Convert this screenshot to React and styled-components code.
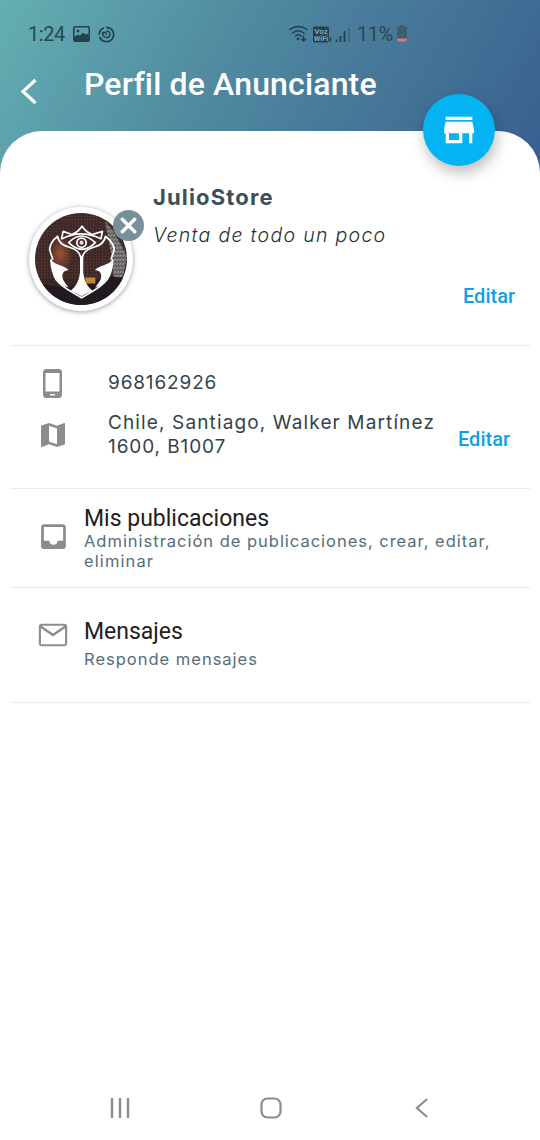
import React from 'react';
import styled, { createGlobalStyle } from 'styled-components';

const Global = createGlobalStyle`
  * { box-sizing: border-box; }
  body { margin: 0; background: #fff; font-family: Roboto, sans-serif; }
`;

const Screen = styled.div`
  width: 540px;
  height: 1140px;
  display: flex;
  flex-direction: column;
  overflow: hidden;
  background: linear-gradient(120deg, #64afb2 0, #508aa0 220px, #39608f 545px);
`;

const StatusBar = styled.header`
  height: 68px;
  padding: 0 132px 0 28px;
  display: flex;
  align-items: center;
  color: #2b4750;
  font-size: 20px;
  svg { display: block; flex: none; }
`;
const Clock = styled.span`
  width: 45px;
  letter-spacing: -0.4px;
`;
const StatusLeft = styled.div`
  display: flex;
  align-items: center;
  gap: 8px;
`;
const StatusRight = styled.div`
  display: flex;
  align-items: center;
  margin-left: auto;
`;
const Percent = styled.span`
  width: 39px;
  margin-left: 5px;
  letter-spacing: -0.5px;
`;

const TitleBar = styled.div`
  height: 63px;
  padding-left: 20px;
  display: flex;
  align-items: flex-start;
  svg { margin-top: 9px; }
`;
const Title = styled.h1`
  margin: -2px 0 0 46px;
  font-size: 32px;
  line-height: 36px;
  font-weight: 500;
  letter-spacing: 0.15px;
  color: #fff;
`;

const Sheet = styled.main`
  position: relative;
  flex: 1;
  display: flex;
  flex-direction: column;
  background: #fff;
  border-radius: 42px 42px 0 0;
`;
const StoreButton = styled.button`
  position: absolute;
  right: 45px;
  top: -37px;
  width: 72px;
  height: 72px;
  padding: 0;
  border: 0;
  border-radius: 50%;
  background: #04b4f2;
  display: grid;
  place-items: center;
  box-shadow: 2px 7px 14px rgba(0, 0, 0, 0.25);
`;

const Section = styled.section`
  height: ${(p) => p.$height}px;
  margin: 0 10px;
  border-bottom: 1px solid #ebebeb;
  display: flex;
`;
const AvatarWrap = styled.div`
  position: relative;
  width: 106px;
  height: 106px;
  margin: 75px 0 0 18px;
`;
const Avatar = styled.div`
  width: 104px;
  height: 104px;
  margin: 1px;
  padding: 6px;
  border-radius: 50%;
  background: #fff;
  box-shadow: 0 1px 5px rgba(50, 80, 85, 0.5);
  svg { display: block; }
`;
const RemoveBadge = styled.button`
  position: absolute;
  top: 4px;
  left: 85px;
  width: 31px;
  height: 31px;
  padding: 0;
  border: 0;
  border-radius: 50%;
  background: #78909a;
  display: grid;
  place-items: center;
`;
const ProfileText = styled.div`
  flex: 1;
  margin-left: 19px;
  padding: 53px 5px 0 0;
  display: flex;
  flex-direction: column;
`;
const Name = styled.h2`
  margin: 0;
  font: 700 22px/26px Inter, sans-serif;
  letter-spacing: ${(p) => p.$spacing}px;
  color: #3b505b;
`;
const Tagline = styled.p`
  margin: 12px 0 0 0;
  font: italic 300 19.5px/26px Inter, sans-serif;
  letter-spacing: ${(p) => p.$spacing}px;
  color: #263238;
`;
const EditLink = styled.button`
  align-self: flex-end;
  margin: ${(p) => p.$margin};
  padding: 0;
  border: 0;
  background: none;
  font: 500 20px/24px Roboto, sans-serif;
  color: #109fe8;
`;

const ContactList = styled.div`
  width: 428px;
  padding: 20px 0 0 26px;
  display: flex;
  flex-direction: column;
`;
const ContactRow = styled.div`
  display: flex;
  align-items: center;
  height: ${(p) => p.$height}px;
`;
const ContactIcon = styled.div`
  width: 33px;
  display: grid;
  place-items: center;
  svg { display: block; }
`;
const ContactText = styled.div`
  margin: 0 0 0 39px;
  font: 400 19px/24px Inter, sans-serif;
  color: #34434a;
`;
const Line = styled.span`
  display: block;
  white-space: nowrap;
  letter-spacing: ${(p) => p.$spacing || 0}px;
`;
const MenuIcon = styled.div`
  width: 33px;
  margin: ${(p) => p.$top}px 0 0 26px;
  svg { display: block; margin-left: ${(p) => p.$shift || 0}px; }
`;
const MenuText = styled.div`
  margin-left: 15px;
  padding-top: ${(p) => p.$top}px;
`;
const MenuTitle = styled.h3`
  margin: 0;
  font: 400 23px/27px Roboto, sans-serif;
  color: #212121;
`;
const MenuNote = styled.div`
  margin-top: ${(p) => p.$gap}px;
  font: 400 16.5px/20px Inter, sans-serif;
  color: #546e7a;
`;
const NavBar = styled.nav`
  height: 64px;
  margin-top: auto;
  padding: 0 111px 0 109px;
  display: grid;
  grid-template-columns: 151px 155px 14px;
  align-items: center;
`;

const Glyph = ({ size = 33, color = '#8c8c8c', children }) => (
  <svg width={size} height={size} viewBox="0 0 24 24" fill={color}>{children}</svg>
);

const Emblem = () => (
  <svg width="92" height="92" viewBox="0 0 90 90">
    <defs>
      <clipPath id="disc"><circle cx="45" cy="45" r="45" /></clipPath>
      <pattern id="mesh" width="3" height="3" patternUnits="userSpaceOnUse">
        <path d="M0 0h3M0 0v3" stroke="#77584e" strokeWidth=".7" opacity=".5" />
      </pattern>
      <pattern id="lace" width="3" height="4" patternUnits="userSpaceOnUse">
        <path d="M0 0l2 3M2.500 1v2" stroke="#c6c5c5" strokeWidth=".6" />
      </pattern>
      <radialGradient id="glow"><stop stopColor="#a1522f" /><stop offset="1" stopColor="#a1522f" stopOpacity="0" /></radialGradient>
    </defs>
    <g clipPath="url(#disc)">
      <path fill="#3c2625" d="M0 0h90v90H0z" />
      <path fill="url(#mesh)" d="M0 0h90v64H0z" />
      <ellipse cx="25" cy="40" rx="12" ry="17" fill="url(#glow)" />
      <path fill="#5a5557" d="M69 8l8 10 13 24-4 20-9 2-2-20z" />
      <path fill="url(#lace)" d="M68 8l9 10 13 24-4 20-9 2-2-22z" />
      <path fill="#211a20" d="M0 69l30 4 46-11 14 2v28H0z" />
      <path fill="#c08a35" d="M49 63h10v6H50z" />
      <g fill="none" stroke="#fff" strokeWidth="1.700" strokeLinejoin="round" strokeLinecap="round">
        <path d="M26 25l1.500-7 8.500 3q6-2 10-8 4 6 10 8l10-3-1.500 7" />
        <path d="M22 23c-4 3-7 7-7.700 12 .7 4 2 7 3 10M69 23c4 3 7.500 7 8.500 12-.7 4-2 7-3 10" />
        <path d="M22 23c2 8 7 9 13 11 6 2 10 6 10 12M69 23c-2 8-7 9-13 11-6 2-10 6-10 12" />
        <path d="M27 25q18-9 37 0" />
        <path d="M33 29q12-13 26 0-13 13-26 0z" />
        <circle cx="45.500" cy="29" r="4.500" />
        <path d="M15.600 46c.5 8 1.500 13 5 19 7 9 16 12 25 18 9-6 18-9 25-18 4-6 5-11 5.400-19" />
      </g>
      <circle cx="45.500" cy="29" r="2" fill="#ddd" />
      <path fill="#fff" d="M44 42h3.200v16c1 9 4 14 9 18-4 2-7 3-10.500 5.500C42 79 39 78 35 76c5-4 8-9 9-18z" />
      <path fill="#fff" d="M15.600 45c4 7 12 5 17.500 11-4 0-6.500 2-6.300 6 .2 4 3.500 7 6 11-11-3-17-14-17.200-28zM76 45c-4 7-12 5-17.500 11 4 0 6.500 2 6.300 6-.2 4-3.500 7-6 11 11-3 17-14 17.200-28z" />
    </g>
  </svg>
);

export default function App() {
  return (
    <>
      <Global />
      <Screen>
        <StatusBar>
          <Clock>1:24</Clock>
          <StatusLeft>
            <svg width="17" height="16" viewBox="0 0 17 16">
              <rect x=".8" y=".8" width="15.4" height="14.4" rx="1.5" fill="none" stroke="#24434b" strokeWidth="1.6" />
              <circle cx="5" cy="5" r="1.4" fill="#24434b" />
              <path d="M1 11l4-2.500 2 1 3-3 2 2 2-1 2 2v6H1z" fill="#24434b" />
            </svg>
            <svg width="17" height="17" viewBox="0 0 17 17" fill="none" stroke="#24434b" strokeWidth="1.8">
              <circle cx="8.500" cy="8.500" r="7.200" strokeDasharray="20 2.200 9 2.200" />
              <path d="M5 7c-1 5 6 6 7 2 0-2-1-4-3-4M4.700 9V6.600H7M8 5v4" strokeWidth="1.500" />
            </svg>
          </StatusLeft>
          <StatusRight>
            <svg width="64" height="19" viewBox="0 0 64 19">
              <g fill="none" stroke="#22404e" strokeWidth="1.5" strokeLinecap="round">
                <path d="M2 4.500c5-4 12-4 17 0M4.500 8c4-3 8-3 11.500 0M7.500 11c2-1.500 4-1.500 5.500 0" />
                <path d="M15.500 11v5M13.500 14l2 2 2-2" />
              </g>
              <circle cx="10" cy="13.800" r="1.400" fill="#22404e" />
              <rect x="25" y="1.500" width="16" height="16" rx="2" fill="#22404e" />
              <text x="33" y="8.800" textAnchor="middle" fontFamily="Roboto, sans-serif" fontWeight="700" fontSize="8" fill="#7da7b2">Voz</text>
              <text x="33" y="16" textAnchor="middle" fontFamily="Roboto, sans-serif" fontWeight="700" fontSize="7.500" fill="#7da7b2">WiFi</text>
              <path d="M42.500 12.500v4M48.500 14.500v2.500M52.500 11v6M56.500 6v11" stroke="#22404e" strokeWidth="1.700" />
              <path d="M61 3v14" stroke="#3c6277" strokeWidth="1.500" />
            </svg>
            <Percent>11%</Percent>
            <svg width="12" height="18" viewBox="0 0 12 18">
              <path fill="#3d5d70" d="M3.500 0h5v2H11v12H1V2h2.500z" />
              <path fill="#e0796d" d="M1 13.500h10q0 3-2 3H3q-2 0-2-3z" />
            </svg>
          </StatusRight>
        </StatusBar>
        <TitleBar>
          <svg width="18" height="28" viewBox="0 0 18 28" fill="none" stroke="#fff" strokeWidth="3.200"><path d="M15.500 3L3 14.500 15.500 26" /></svg>
          <Title>Perfil de Anunciante</Title>
        </TitleBar>
        <Sheet>
          <StoreButton aria-label="Tienda">
            <Glyph size={40} color="#fff"><path d="M20 4H4v2h16V4zm1 10v-2l-1-5H4l-1 5v2h1v6h10v-6h4v6h2v-6h1zm-9 4H6v-4h6v4z" /></Glyph>
          </StoreButton>
          <Section $height={215}>
            <AvatarWrap>
              <Avatar><Emblem /></Avatar>
              <RemoveBadge aria-label="Quitar">
                <svg width="17" height="17" viewBox="0 0 15 15" stroke="#fff" strokeWidth="3" strokeLinecap="round"><path d="M2 2l11 11M13 2L2 13" /></svg>
              </RemoveBadge>
            </AvatarWrap>
            <ProfileText>
              <Name $spacing={1.15}>JulioStore</Name>
              <Tagline $spacing={1.3}>Venta de todo un poco</Tagline>
              <EditLink $margin="36px 10px 0 0">Editar</EditLink>
            </ProfileText>
          </Section>
          <Section $height={143}>
            <ContactList>
              <ContactRow $height={34}>
                <ContactIcon>
                  <svg width="19" height="29" viewBox="0 0 19 29">
                    <path fill="#8c8c8c" fillRule="evenodd" d="M3.500 0h12Q19 0 19 3.500v22q0 3.500-3.500 3.500h-12Q0 29 0 25.500v-22Q0 0 3.500 0zM2.500 4v18.500h14V4zM7 25v1.500h5V25z" />
                  </svg>
                </ContactIcon>
                <ContactText><Line $spacing={0.85}>968162926</Line></ContactText>
              </ContactRow>
              <ContactRow $height={70}>
                <ContactIcon>
                  <Glyph size={32}><path d="M20.500 3l-.16.030L15 5.100 9 3 3.360 4.900c-.21.070-.36.250-.36.480V20.500c0 .280.220.500.500.500l.16-.030L9 18.900l6 2.100 5.640-1.900c.21-.070.360-.250.360-.480V3.500c0-.280-.220-.500-.500-.500zM15 19l-6-2.110V5l6 2.110V19z" /></Glyph>
                </ContactIcon>
                <ContactText>
                  <Line $spacing={1.13}>Chile, Santiago, Walker Martínez</Line>
                  <Line $spacing={0.9}>1600, B1007</Line>
                </ContactText>
              </ContactRow>
            </ContactList>
            <EditLink $margin="0 0 37px 20px">Editar</EditLink>
          </Section>
          <Section $height={99}>
            <MenuIcon $top={31} $shift={0.7}>
              <Glyph><path d="M19 3H4.990c-1.110 0-1.980.890-1.980 2L3 19c0 1.100.880 2 1.990 2H19c1.100 0 2-.900 2-2V5c0-1.110-.900-2-2-2zm0 12h-4c0 1.660-1.350 3-3 3s-3-1.340-3-3H4.990V5H19v10z" /></Glyph>
            </MenuIcon>
            <MenuText $top={16}>
              <MenuTitle>Mis publicaciones</MenuTitle>
              <MenuNote $gap={-1}>
                <Line $spacing={0.98}>Administración de publicaciones, crear, editar,</Line>
                <Line $spacing={1.1}>eliminar</Line>
              </MenuNote>
            </MenuText>
          </Section>
          <Section $height={115}>
            <MenuIcon $top={30}>
              <Glyph size={34}><path d="M20 4H4c-1.100 0-2 .900-2 2v12c0 1.100.900 2 2 2h16c1.100 0 2-.900 2-2V6c0-1.100-.900-2-2-2zm.500 14.500h-17V7.200L12 13l8.500-5.800zM12 11L4 5.500h16z" /></Glyph>
            </MenuIcon>
            <MenuText $top={30}>
              <MenuTitle>Mensajes</MenuTitle>
              <MenuNote $gap={4}><Line $spacing={1}>Responde mensajes</Line></MenuNote>
            </MenuText>
          </Section>
          <NavBar>
            <svg width="22" height="20" viewBox="0 0 22 20" stroke="#8c8c8c" strokeWidth="2.400"><path d="M3 0v20M11 0v20M19 0v20" /></svg>
            <svg width="22" height="22" viewBox="0 0 22 22" fill="none" stroke="#8c8c8c" strokeWidth="2.200"><rect x="1.500" y="1.500" width="19" height="19" rx="6" /></svg>
            <svg width="14" height="20" viewBox="0 0 14 20" fill="none" stroke="#8c8c8c" strokeWidth="2.200"><path d="M12 1L2 10l10 9" /></svg>
          </NavBar>
        </Sheet>
      </Screen>
    </>
  );
}
